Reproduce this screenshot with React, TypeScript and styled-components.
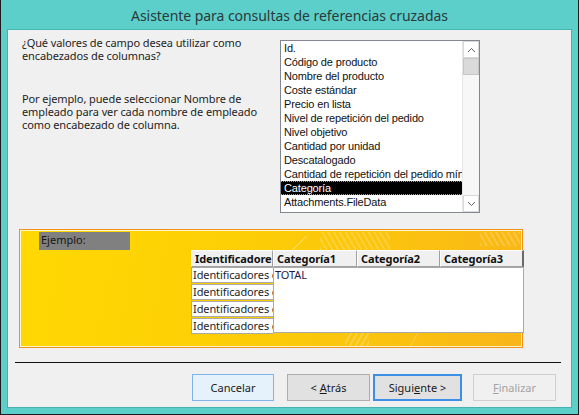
import React from 'react';
import styled, { createGlobalStyle } from 'styled-components';

const Global = createGlobalStyle`
  html, body {
    margin: 0;
    padding: 0;
    background: #5ccfcb;
  }
  * {
    box-sizing: border-box;
  }
`;

const UI = `"Noto Sans", "Open Sans", sans-serif`;

const Window = styled.div`
  width: 579px;
  height: 415px;
  display: flex;
  flex-direction: column;
  background: #5ccfcb;
  border-left: 1px solid #1b1b1b;
  border-right: 1px solid #1b1b1b;
  border-bottom: 1px solid #1b1b1b;
  font-family: ${UI};
  color: #1e1e1e;
`;

const TitleBar = styled.div`
  height: 29px;
  display: flex;
  align-items: center;
  justify-content: center;
  font-size: 14px;
  letter-spacing: -0.05px;
  color: #2b3a3a;
  padding-top: 2px;
`;

const Body = styled.div`
  flex: 1;
  margin: 0 6px 6px 6px;
  border: 1px solid #47b3b0;
  background: #f0f0f0;
  display: flex;
  flex-direction: column;
`;

const TopRow = styled.div`
  display: flex;
  padding-top: 6px;
`;

const Prompt = styled.div`
  width: 272px;
  padding-left: 14px;
  font-size: 11px;
  letter-spacing: -0.1px;
  line-height: 13px;
`;

const Para = styled.p<{ $gap?: number }>`
  margin: 0 0 ${p => p.$gap ?? 0}px 0;
`;

const ListBox = styled.div`
  margin-top: 4px;
  width: 200px;
  height: 173px;
  border: 1px solid #828790;
  background: #fff;
  display: flex;
`;

const Items = styled.div`
  flex: 1;
  min-width: 0;
  overflow: hidden;
  font-family: "Liberation Sans", Arial, sans-serif;
  font-size: 11px;
  letter-spacing: -0.15px;
`;

const Item = styled.div<{ $selected?: boolean }>`
  height: 14px;
  line-height: 12px;
  padding-left: 3px;
  white-space: nowrap;
  overflow: hidden;
  background: ${p => (p.$selected ? '#000' : 'transparent')};
  color: ${p => (p.$selected ? '#fff' : '#111')};
  border: 1px dotted ${p => (p.$selected ? '#9a9a9a' : 'transparent')};
  border-left: 0;
  border-right: 0;
`;

const ScrollBar = styled.div`
  width: 17px;
  flex: none;
  display: flex;
  flex-direction: column;
  background: #f7f7f7;
  border-left: 1px solid #e6e6e6;
`;

const Arrow = styled.div`
  height: 17px;
  display: flex;
  align-items: center;
  justify-content: center;
  border: 1px solid #d9d9d9;
  background: #fff;
`;

const Thumb = styled.div`
  height: 17px;
  background: #dadada;
  border: 1px solid #c6c6c6;
`;

const Track = styled.div`
  flex: 1;
`;

const Example = styled.div`
  margin: 16px 0 0 11px;
  width: 504px;
  height: 119px;
  border: 1px solid #f2911a;
  box-shadow: inset 0 0 0 1px #fff6cf;
  background:
    linear-gradient(135deg, transparent 45%, rgba(255,255,255,0.25) 46%, rgba(255,255,255,0.25) 50%, transparent 51%) 268px 6px / 24px 14px no-repeat,
    repeating-linear-gradient(60deg, rgba(255,255,255,0.18) 0 2px, transparent 2px 5px) 300px 2px / 70px 18px no-repeat,
    repeating-linear-gradient(60deg, rgba(255,255,255,0.18) 0 2px, transparent 2px 5px) 460px 2px / 40px 14px no-repeat,
    repeating-linear-gradient(120deg, rgba(255,255,255,0.2) 0 2px, transparent 2px 5px) 325px 102px / 24px 14px no-repeat,
    linear-gradient(120deg, transparent 48%, rgba(255,255,255,0.25) 49%, rgba(255,255,255,0.25) 51%, transparent 52%) 385px 98px / 20px 20px no-repeat,
    linear-gradient(100deg, #ffd902 0%, #fdcf05 40%, #fbc40e 70%, #f9b618 100%);
  display: flex;
  flex-direction: column;
  padding: 1px;
`;

const Label = styled.div`
  margin: 1px 0 0 18px;
  width: 91px;
  height: 18px;
  background: #808080;
  font-size: 11px;
  line-height: 16px;
  padding-left: 2px;
  color: #161616;
`;

const Table = styled.div`
  margin-left: 170px;
  width: 333px;
  display: grid;
  grid-template-columns: 82px 84px 83px 84px;
  font-size: 11px;
  letter-spacing: -0.1px;
`;

const Head = styled.div<{ $last?: boolean }>`
  height: 17px;
  line-height: 15px;
  background: #f0f0f0;
  font-weight: bold;
  padding-left: 3px;
  white-space: nowrap;
  overflow: hidden;
  min-width: 0;
  border-top: 1px solid #fff;
  border-left: 1px solid #fff;
  border-bottom: 1px solid #a0a0a0;
  border-right: ${p => (p.$last ? '2px solid #6a6a6a' : '1px solid #a0a0a0')};
  color: #111;
`;

const RowLabels = styled.div`
  display: flex;
  flex-direction: column;
  gap: 1px;
  min-width: 0;
`;

const Cell = styled.div`
  height: 16px;
  line-height: 14px;
  background: #fff;
  border: 1px solid #a9a9a9;
  border-right: 0;
  padding-left: 1px;
  white-space: nowrap;
  overflow: hidden;
`;

const Values = styled.div`
  grid-column: 2 / span 3;
  height: 66px;
  background: #fff;
  border: 1px solid #a9a9a9;
  padding-left: 1px;
  line-height: 14px;
  color: #1c1c4a;
`;

const Separator = styled.div`
  margin: 14px 0 0 7px;
  width: 546px;
  height: 1px;
  background: #111;
`;

const Buttons = styled.div`
  display: flex;
  justify-content: flex-end;
  margin-top: 11px;
  padding-right: 15px;
`;

type Kind = 'hot' | 'normal' | 'default' | 'disabled';

const Button = styled.button<{ $kind: Kind; $w: number; $after: number }>`
  width: ${p => p.$w}px;
  height: 27px;
  margin-right: ${p => p.$after}px;
  font-family: ${UI};
  font-size: 11px;
  padding: 0;
  color: ${p => (p.$kind === 'disabled' ? '#a3a3a3' : '#1a1a1a')};
  background: ${p =>
    p.$kind === 'hot' ? '#e5f1fb' : p.$kind === 'disabled' ? '#f0f0f0' : '#e1e1e1'};
  border: 1px solid
    ${p =>
      p.$kind === 'hot'
        ? '#7eb4ea'
        : p.$kind === 'default'
        ? '#3c8fe6'
        : p.$kind === 'disabled'
        ? '#cfcfcf'
        : '#adadad'};
  ${p => (p.$kind === 'default' ? 'box-shadow: inset 0 0 0 1px #3c8fe6;' : '')}
`;

const fields = [
  'Id.',
  'Código de producto',
  'Nombre del producto',
  'Coste estándar',
  'Precio en lista',
  'Nivel de repetición del pedido',
  'Nivel objetivo',
  'Cantidad por unidad',
  'Descatalogado',
  'Cantidad de repetición del pedido mín',
  'Categoría',
  'Attachments.FileData',
];

const Chevron = ({ up }: { up?: boolean }) => (
  <svg width="9" height="6" viewBox="0 0 9 6">
    <polyline
      points={up ? '1,5 4.5,1.5 8,5' : '1,1 4.5,4.5 8,1'}
      fill="none"
      stroke="#606060"
      strokeWidth="1"
    />
  </svg>
);

export default function App() {
  return (
    <Window>
      <Global />
      <TitleBar>Asistente para consultas de referencias cruzadas</TitleBar>
      <Body>
        <TopRow>
          <Prompt>
            <Para $gap={30}>¿Qué valores de campo desea utilizar como encabezados de columnas?</Para>
            <Para>
              Por ejemplo, puede seleccionar Nombre de empleado para ver cada nombre de empleado
              como encabezado de columna.
            </Para>
          </Prompt>
          <ListBox>
            <Items>
              {fields.map(f => (
                <Item key={f} $selected={f === 'Categoría'}>
                  {f}
                </Item>
              ))}
            </Items>
            <ScrollBar>
              <Arrow>
                <Chevron up />
              </Arrow>
              <Thumb />
              <Track />
              <Arrow>
                <Chevron />
              </Arrow>
            </ScrollBar>
          </ListBox>
        </TopRow>

        <Example>
          <Label>Ejemplo:</Label>
          <Table>
            <Head>Identificadore</Head>
            <Head>Categoría1</Head>
            <Head>Categoría2</Head>
            <Head $last>Categoría3</Head>
            <RowLabels>
              <Cell>Identificadores d</Cell>
              <Cell>Identificadores d</Cell>
              <Cell>Identificadores d</Cell>
              <Cell>Identificadores d</Cell>
            </RowLabels>
            <Values>TOTAL</Values>
          </Table>
        </Example>

        <Separator />

        <Buttons>
          <Button $kind="hot" $w={82} $after={13}>Cancelar</Button>
          <Button $kind="normal" $w={83} $after={3}>
            &lt; <u>A</u>trás
          </Button>
          <Button $kind="default" $w={89} $after={11}>
            Sigui<u>e</u>nte &gt;
          </Button>
          <Button $kind="disabled" $w={83} $after={0}>
            <u>F</u>inalizar
          </Button>
        </Buttons>
      </Body>
    </Window>
  );
}
